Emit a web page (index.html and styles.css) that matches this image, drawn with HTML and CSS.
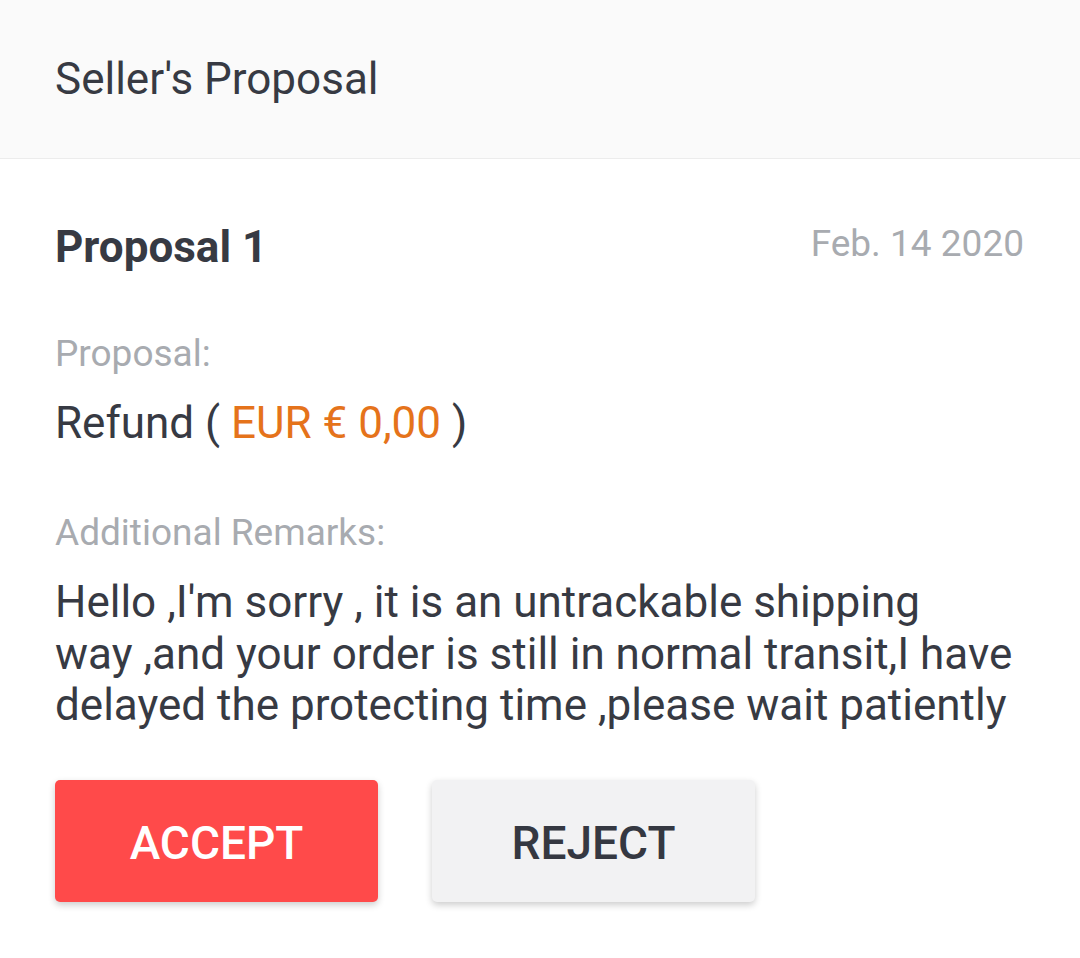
FILE: index.html
```html
<!DOCTYPE html>
<html lang="en">
<head>
<meta charset="utf-8">
<title>Seller's Proposal</title>
<link rel="stylesheet" href="styles.css">
</head>
<body>
<header class="top-bar">
  <h1 class="top-title">Seller's Proposal</h1>
</header>
<main class="proposal">
  <div class="proposal-head">
    <h2 class="proposal-name">Proposal 1</h2>
    <span class="proposal-date">Feb. 14 2020</span>
  </div>
  <div class="field-label label-proposal">Proposal:</div>
  <div class="field-value">Refund ( <span class="amount">EUR € 0,00</span> )</div>
  <div class="field-label label-remarks">Additional Remarks:</div>
  <p class="remarks">Hello ,I'm sorry , it is an untrackable shipping<br>way ,and your order is still in normal transit,I have delayed the protecting time ,please wait patiently</p>
  <div class="actions">
    <button class="btn btn-accept">ACCEPT</button>
    <button class="btn btn-reject">REJECT</button>
  </div>
</main>
</body>
</html>
```
FILE: styles.css
```css
html, body {
  margin: 0;
  padding: 0;
  background: #ffffff;
  font-family: Roboto, "Noto Sans", "Liberation Sans", sans-serif;
  color: #373a43;
}

.top-bar {
  height: 158px;
  background: #fafafa;
  border-bottom: 1px solid #ececec;
  display: flex;
  align-items: center;
  padding-left: 55px;
}

.top-title {
  margin: 0;
  font-size: 44px;
  font-weight: 400;
  line-height: 52px;
  color: #373a43;
}

.proposal {
  padding: 0 56px 40px 55px;
}

.proposal-head {
  margin-top: 62px;
  display: flex;
  justify-content: space-between;
  align-items: center;
}

.proposal-name {
  margin: 0;
  font-size: 44px;
  font-weight: 700;
  line-height: 52px;
}

.proposal-date {
  font-size: 37px;
  line-height: 44px;
  color: #a8abb0;
  margin-bottom: 7px;
}

.field-label {
  font-size: 37px;
  line-height: 44px;
  color: #a8abb0;
}

.label-proposal {
  margin-top: 59px;
}

.label-remarks {
  margin-top: 62px;
}

.field-value {
  margin-top: 21px;
  font-size: 44px;
  line-height: 52px;
}

.amount {
  color: #e5731b;
}

.remarks {
  margin: 22px 0 0 0;
  font-size: 44px;
  line-height: 51.5px;
}

.actions {
  margin-top: 48px;
  display: flex;
  gap: 54px;
}

.btn {
  width: 323px;
  height: 122px;
  border: none;
  border-radius: 5px;
  font-family: Roboto, "Noto Sans", "Liberation Sans", sans-serif;
  font-size: 46px;
  font-weight: 500;
  box-shadow: 0 3px 7px rgba(0, 0, 0, 0.2);
  padding: 4px 0 0 0;
}

.btn-accept {
  background: #ff4a4a;
  color: #ffffff;
}

.btn-reject {
  background: #f2f2f3;
  color: #353841;
}
```
